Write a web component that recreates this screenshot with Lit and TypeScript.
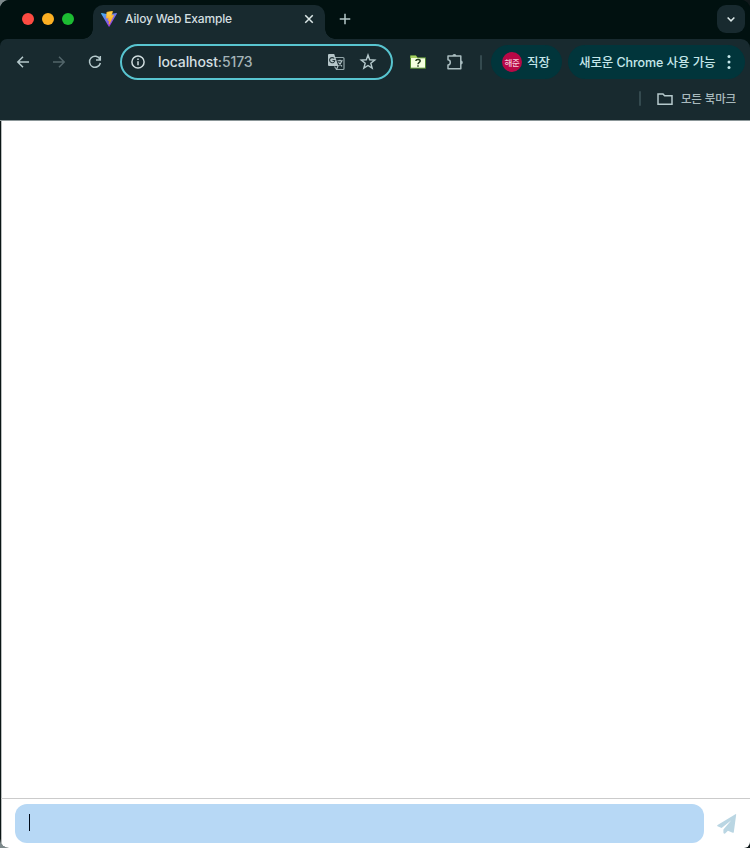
import { LitElement, html, css, svg } from "lit";
import { customElement } from "lit/decorators.js";

const line = (d: string, cls = "") => html`<svg class="ic ${cls}" viewBox="0 0 16 16">${svg`<path d=${d}></path>`}</svg>`;

@customElement("browser-tabs")
class BrowserTabs extends LitElement {
  static styles = css`
    :host { display: flex; height: 39px; box-sizing: border-box; padding: 5px 5px 0 22px; background: #011110; }
    .lights { display: flex; gap: 8px; width: 71px; padding-top: 8px; flex: none; }
    .light { width: 12px; height: 12px; border-radius: 50%; }
    .red { background: #fd4b42; } .yellow { background: #fdb023; } .green { background: #1cbc32; }
    .tab { position: relative; width: 232px; box-sizing: border-box; height: 34px; padding: 0 10px 6px 8px; display: flex; align-items: center; background: #182a2f; border-radius: 10px 10px 0 0; flex: none; }
    .tab::before, .tab::after { content: ""; position: absolute; bottom: 0; width: 10px; height: 10px; }
    .tab::before { left: -10px; background: radial-gradient(circle at 0 0, transparent 9.5px, #182a2f 10px); }
    .tab::after { right: -10px; background: radial-gradient(circle at 100% 0, transparent 9.5px, #182a2f 10px); }
    .logo { width: 16px; height: 16px; margin-right: 8px; flex: none; }
    .title { flex: 1; font-size: 12px; font-weight: 500; letter-spacing: -0.16px; color: #d3dfe0; white-space: nowrap; padding-bottom: 2px; }
    .ic { width: 12px; height: 12px; fill: none; stroke: #dce8e8; stroke-width: 2; flex: none; }
    .plus { stroke: #b5c9c9; width: 12px; height: 12px; margin: 8px 0 0 14px; }
    .menu { width: 28px; height: 28px; margin-left: auto; border-radius: 9px; background: #182a2f; display: flex; align-items: center; justify-content: center; }
  `;
  render() {
    return html`
      <div class="lights"><span class="light red"></span><span class="light yellow"></span><span class="light green"></span></div>
      <div class="tab">
        <svg class="logo" viewBox="0 0 32 32">
          <defs>
            <linearGradient id="v" x1="0" y1="0" x2=".6" y2="1"><stop stop-color="#41b9f4"></stop><stop offset="1" stop-color="#a02ce5"></stop></linearGradient>
            <linearGradient id="b" x1="0" y1="0" x2="0" y2="1"><stop stop-color="#ffd84a"></stop><stop offset="1" stop-color="#ff9d1a"></stop></linearGradient>
          </defs>
          <path fill="url(#v)" d="M31.7 5.7 17 31c-.4.7-1.3.7-1.7 0L.3 5.7c-.5-.8.2-1.7 1-1.5L16 6.8l14.6-2.6c.9-.2 1.5.7 1.1 1.5Z"></path>
          <path fill="url(#b)" stroke="#ffb127" d="m22.7.2-10.8 2.1c-.3 0-.4.2-.4.5l-.7 11.2c0 .4.3.6.6.5l3-.6c.4-.1.7.2.6.6l-.9 4.3c0 .4.2.7.6.6l1.8-.6c.4-.1.7.2.6.6l-1.4 6.8c-.1.4.5.7.8.3l8.9-17.7c.2-.3-.1-.7-.5-.6l-3.1.6c-.4.1-.7-.2-.6-.6l2-7.3c.1-.4-.2-.7-.5-.7Z"></path>
        </svg>
        <span class="title">Ailoy Web Example</span>
        ${line("M3 3 13 13M13 3 3 13")}
      </div>
      ${line("M8 1V15M1 8H15", "plus")}
      <div class="menu">${line("M3.5 6 8 10.5 12.5 6")}</div>
    `;
  }
}

@customElement("browser-toolbar")
class BrowserToolbar extends LitElement {
  static styles = css`
    :host { display: block; height: 82px; background: #182a2f; border-bottom: 1px solid #8b9698; box-sizing: border-box; border-radius: 7px 9px 0 0; }
    .row { display: flex; align-items: center; height: 46px; box-sizing: border-box; padding: 0 3px 0 15px; }
    .ic { width: 16px; height: 16px; fill: none; stroke: #b5c9cc; stroke-width: 1.5; flex: none; margin-right: 20px; }
    .dim { stroke: #52656a; }
    .reload { margin-right: 17px; }
    .address { width: 273px; height: 36px; box-sizing: border-box; border: 2px solid #58c5d0; border-radius: 18px; display: flex; align-items: center; padding: 0 15px 0 8px; flex: none; }
    .info { margin-right: 12px; stroke: #d0dddf; }
    .url { flex: 1; font-size: 14px; font-weight: 500; color: #d3dfe1; letter-spacing: -0.12px; padding-bottom: 2px; }
    .port { color: #a3b3b7; }
    .translate { width: 18px; height: 18px; margin-right: 14px; flex: none; }
    .star { width: 18px; height: 18px; margin-right: -1px; stroke-width: 1.25; }
    .ext { width: 16px; height: 16px; margin: 0 20px 0 17px; flex: none; }
    .puzzle { width: 18px; height: 18px; margin-right: 16px; flex: none; fill: none; stroke: #a9bdc0; stroke-width: 1.5; }
    .bar { width: 2px; height: 15px; border-radius: 1px; background: #344a4f; flex: none; }
    .chip { height: 34px; border-radius: 17px; background: #01353b; color: #c5e7ea; display: flex; align-items: center; box-sizing: border-box; font-size: 12.5px; font-weight: 500; white-space: nowrap; flex: none; }
    .chip > span:not(.avatar) { padding-bottom: 1px; }
    .profile { width: 71px; margin: 0 6px 0 9px; padding-left: 11px; }
    .avatar { width: 20px; height: 20px; border-radius: 50%; background: #b80846; color: #f5c9d9; font-size: 8.5px; display: flex; align-items: center; justify-content: center; margin-right: 5px; flex: none; letter-spacing: -0.3px; }
    .update { width: 177px; padding: 0 14px 0 11px; justify-content: space-between; letter-spacing: -0.08px; }
    .dots { width: 4px; height: 16px; fill: #c5e7ea; flex: none; }
    .marks { height: 28px; padding: 0 14px 1px 0; justify-content: flex-end; font-size: 11.5px; font-weight: 500; color: #a9babd; letter-spacing: -0.15px; }
    .marks > span:last-child { padding-bottom: 1px; }
    .folder { width: 16px; margin: 0 8px 0 16px; }
  `;
  render() {
    return html`
      <div class="row">
        ${line("M14 8H3M8 2.8 2.8 8 8 13.2")}
        ${line("M2 8H13M8 2.8 13.2 8 8 13.2", "dim")}
        ${line("M12.9 5.2A5.5 5.5 0 1 0 13.4 9M13.3 2V6H9", "reload")}
        <div class="address">
          ${line("M8 1.9A6.1 6.1 0 1 0 8 14.1 6.1 6.1 0 1 0 8 1.9M8 7.2V11.2M8 4.6V6", "info")}
          <span class="url">localhost<span class="port">:5173</span></span>
          <svg class="translate" viewBox="0 0 18 18">
            <path d="M8 4.5H16Q17 4.5 17 5.5V15.5Q17 16.5 16 16.5H9.5L7.5 13.5" fill="none" stroke="#93a6a9" stroke-width="1.2"></path>
            <path d="M2 1H7.2L11.4 13H2Q1 13 1 12V2Q1 1 2 1Z" fill="#b5c6c9"></path>
            <path d="M7.2 5.5A2.6 2.6 0 1 0 7.8 7.5H5.5" fill="none" stroke="#25373b" stroke-width="1.1"></path>
            <path d="M10.5 7.8H15.7M13 6.7V7.8M14.7 8Q13.8 11 11.5 12.7M11.5 9.3 15 13.3M11 13 9.5 16.5" fill="none" stroke="#b5c6c9" stroke-width="1.1"></path>
          </svg>
          ${line("M8 1.8 9.5 6 14 6.3 10.5 9.1 11.7 13.5 8 11.1 4.3 13.5 5.5 9.1 2 6.3 6.5 6Z", "star")}
        </div>
        <svg class="ext" viewBox="0 0 16 16">
          <path d="M.5 1.8H6L7.5 3.8H15.5V14.2H.5Z" fill="#f5ffdf" stroke="#4e852b"></path>
          <path d="M.5 1.8H6L7.5 4H.5Z" fill="#a7cf62"></path>
          <path d="M5.8 7Q6 5.4 8 5.4 10.2 5.4 10.2 7C10.2 8.5 8 8.3 8 10.3M8 11.3V12.8" fill="none" stroke="#21391a" stroke-width="1.5"></path>
        </svg>
        <svg class="puzzle" viewBox="0 0 18 18">
          <path d="M2 3H14.8V15.8H2V12Q4.3 11.6 4.3 9.4T2 6.8Z" stroke-linejoin="round"></path>
          <path d="M6.4 3A2 2 0 0 1 10.4 3ZM14.8 7.4A2 2 0 0 1 14.8 11.4Z" fill="#a9bdc0" stroke="none"></path>
        </svg>
        <span class="bar"></span>
        <div class="chip profile"><span class="avatar">해준</span><span>직장</span></div>
        <div class="chip update"><span>새로운 Chrome 사용 가능</span>
          <svg class="dots" viewBox="0 0 4 16"><circle cx="2" cy="2.5" r="1.5"></circle><circle cx="2" cy="8" r="1.5"></circle><circle cx="2" cy="13.5" r="1.5"></circle></svg>
        </div>
      </div>
      <div class="row marks">
        <span class="bar"></span>
        ${line("M1 3H6L7.6 4.8H15V13.2H1Z", "folder")}
        <span>모든 북마크</span>
      </div>
    `;
  }
}

@customElement("chat-page")
class ChatPage extends LitElement {
  static styles = css`
    :host { display: flex; flex-direction: column; flex: 1; background: #fff; border-left: 1px solid #0b1515; box-shadow: inset 1px 0 #b9bdbd; }
    .messages { flex: 1; }
    .composer { height: 50px; box-sizing: border-box; border-top: 1px solid #cbcbcb; padding: 5px 13px 5px 14px; display: flex; align-items: center; }
    .field { width: 689px; height: 39px; box-sizing: border-box; border-radius: 12px; background: #b7d8f5; padding: 10px 14px; flex: none; }
    .caret { display: block; width: 1px; height: 17px; background: #000a18; }
    .send { width: 20px; height: 20px; margin-left: 13px; margin-top: 1px; fill: #bad6e3; flex: none; }
  `;
  render() {
    return html`
      <div class="messages"></div>
      <div class="composer">
        <div class="field"><span class="caret"></span></div>
        <svg class="send" viewBox="0 0 20 20"><path d="M19.2.5 16.8 18.2Q16.5 19 15.7 18.7L10.9 16.8 8.1 19.5Q6.4 20 6.4 18.5V15.5L14.3 6.2 4.6 14.1.5 12.2Q-.2 11.6.6 10.9L18.4.2Q19.1-.1 19.2.5Z"></path></svg>
      </div>
    `;
  }
}

@customElement("app-root")
class AppRoot extends LitElement {
  static styles = css`
    :host { display: block; height: 848px; background: linear-gradient(90deg, #7d898b 50%, #10191b 50%); font-family: Inter, "Noto Sans CJK KR", sans-serif; font-weight: 400; }
    .window { height: 848px; display: flex; flex-direction: column; overflow: hidden; background: #011110; border-radius: 9px 9px 6px 9px; }
  `;
  render() {
    return html`<div class="window"><browser-tabs></browser-tabs><browser-toolbar></browser-toolbar><chat-page></chat-page></div>`;
  }
}
